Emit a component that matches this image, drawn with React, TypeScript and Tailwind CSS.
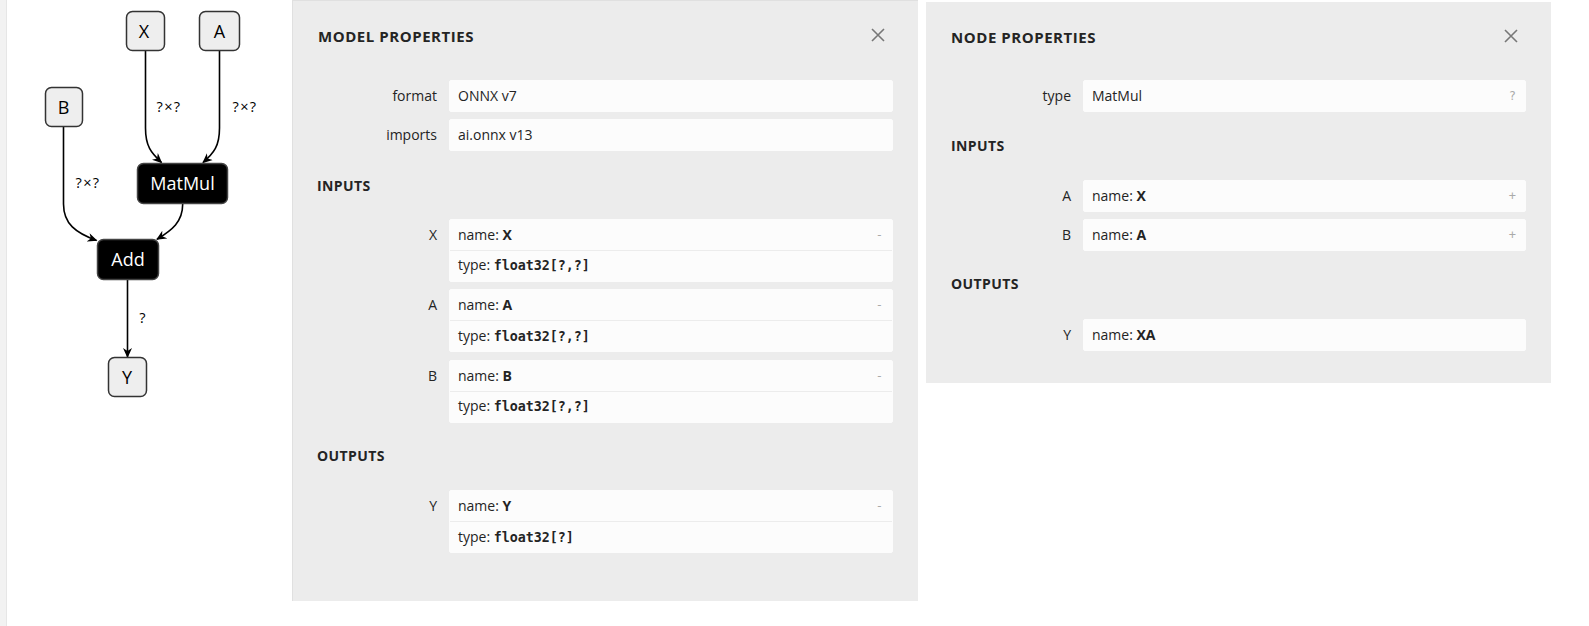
import React from "react";

type Line = { k: string; v: string; code?: boolean };
type Item = { label: string; lines: Line[]; exp?: string; plain?: boolean };

function CloseIcon() {
  return (
    <svg width="14" height="14" viewBox="0 0 14 14" className="block">
      <path d="M1 1 L13 13 M13 1 L1 13" stroke="#777777" strokeWidth="1.6" fill="none" />
    </svg>
  );
}

function ValueBox({ item }: { item: Item }) {
  return (
    <div className="flex-1 rounded-[2px] border border-[#fcfcfc] bg-[#fcfcfc]">
      {item.lines.map((l, i) => (
        <div
          key={i}
          className={
            "flex items-center justify-between pl-[8px] pr-[9px] leading-[30px] " +
            (i > 0 ? "h-[31px] border-t border-[#ececec]" : "h-[30px]")
          }
        >
          <span className="text-[14px] text-[#242424]">
            {item.plain ? (
              l.v
            ) : (
              <>
                {l.k}:{" "}
                {l.code ? (
                  <code className="font-['DejaVu_Sans_Mono',monospace] text-[13.3px] font-bold">{l.v}</code>
                ) : (
                  <b className="font-bold">{l.v}</b>
                )}
              </>
            )}
          </span>
          {i === 0 && item.exp ? (
            <span className="font-['DejaVu_Sans_Mono',monospace] text-[12px] text-[#aaaaaa]">{item.exp}</span>
          ) : null}
        </div>
      ))}
    </div>
  );
}

function Row({ item }: { item: Item }) {
  return (
    <div className="flex">
      <div className="w-[120px] shrink-0 pt-[1px] text-right text-[14px] leading-[30px] text-[#242424]">{item.label}</div>
      <div className="w-[12px] shrink-0" />
      <ValueBox item={item} />
    </div>
  );
}

function Section({ title, items, pt }: { title: string; items: Item[]; pt: string }) {
  return (
    <>
      <div className={"h-[67.5px] text-[14px] font-bold leading-[20px] tracking-[0.4px] text-[#242424] " + pt}>{title}</div>
      <div className="flex flex-col gap-[7.5px]">
        {items.map((it, i) => (
          <Row key={i} item={it} />
        ))}
      </div>
    </>
  );
}

function Header({ title, titleTop, closeTop, height }: { title: string; titleTop: string; closeTop: string; height: string }) {
  return (
    <div className={"flex items-start justify-between pl-[25px] pr-[33px] " + height}>
      <div className={"text-[15px] font-bold leading-[20px] tracking-[0.55px] text-[#242424] " + titleTop}>{title}</div>
      <div className={closeTop}>
        <CloseIcon />
      </div>
    </div>
  );
}

function Graph() {
  const light = "#eeeeee";
  return (
    <svg width="285" height="626" viewBox="7 0 285 626" className="block">
      <defs>
        <marker id="arr" viewBox="0 0 10 10" refX="9" refY="5" markerWidth="10" markerHeight="10" markerUnits="userSpaceOnUse" orient="auto">
          <path d="M0,0.5 L10,5 L0,9.5 L3,5 z" fill="#000" />
        </marker>
      </defs>
      <g fill="none" stroke="#000" strokeWidth="1.6">
        <path d="M145.5 51 L145.5 128 C145.5 146 151 153 161.5 162.5" markerEnd="url(#arr)" />
        <path d="M219.5 51 L219.5 128 C219.5 146 214 153 203 162.5" markerEnd="url(#arr)" />
        <path d="M63.5 127 L63.5 204 C63.5 224 76 233 96.5 240.5" markerEnd="url(#arr)" />
        <path d="M182.7 204 C182.7 222 172 230 157 239.3" markerEnd="url(#arr)" />
        <path d="M127.5 280 L127.5 357" markerEnd="url(#arr)" />
      </g>
      <g fontFamily="'Open Sans', sans-serif" fontSize="14.5" fill="#000" textAnchor="middle" letterSpacing="1.4">
        <text x="169" y="112">?×?</text>
        <text x="245" y="112">?×?</text>
        <text x="88" y="188">?×?</text>
        <text x="143" y="323">?</text>
      </g>
      <g stroke="#333333" strokeWidth="1.5">
        <rect x="126.5" y="11.5" width="38" height="39" rx="6" fill={light} />
        <rect x="199.5" y="11.5" width="40" height="39" rx="6" fill={light} />
        <rect x="45.5" y="87.5" width="37" height="39" rx="6" fill={light} />
        <rect x="137.5" y="163.5" width="90" height="40" rx="6" fill="#000" stroke="#444" />
        <rect x="97.5" y="239.5" width="61" height="40" rx="6" fill="#000" stroke="#444" />
        <rect x="108.5" y="357.5" width="38" height="39" rx="6" fill={light} />
      </g>
      <g fontFamily="'Open Sans', sans-serif" fontSize="18" textAnchor="middle">
        <text x="144" y="37.5" fill="#000">X</text>
        <text x="219.5" y="37.5" fill="#000">A</text>
        <text x="63.5" y="113.5" fill="#000">B</text>
        <text x="182.5" y="190" fill="#fff">MatMul</text>
        <text x="128" y="266" fill="#fff">Add</text>
        <text x="127" y="383.5" fill="#000">Y</text>
      </g>
    </svg>
  );
}

export default function App() {
  const modelTop: Item[] = [
    { label: "format", lines: [{ k: "", v: "ONNX v7" }], plain: true },
    { label: "imports", lines: [{ k: "", v: "ai.onnx v13" }], plain: true },
  ];
  const modelInputs: Item[] = ["X", "A", "B"].map((n) => ({
    label: n,
    exp: "-",
    lines: [
      { k: "name", v: n },
      { k: "type", v: "float32[?,?]", code: true },
    ],
  }));
  const modelOutputs: Item[] = [
    {
      label: "Y",
      exp: "-",
      lines: [
        { k: "name", v: "Y" },
        { k: "type", v: "float32[?]", code: true },
      ],
    },
  ];
  const nodeTop: Item[] = [{ label: "type", lines: [{ k: "", v: "MatMul" }], plain: true, exp: "?" }];
  const nodeInputs: Item[] = [
    { label: "A", exp: "+", lines: [{ k: "name", v: "X" }] },
    { label: "B", exp: "+", lines: [{ k: "name", v: "A" }] },
  ];
  const nodeOutputs: Item[] = [{ label: "Y", lines: [{ k: "name", v: "XA" }] }];

  return (
    <div className="flex h-[626px] w-[1589px] overflow-hidden bg-white font-['Open_Sans',sans-serif] text-[#242424]">
      <div className="h-full w-[7px] shrink-0 border-r border-[#e6e6e6] bg-[#f2f2f2]" />
      <div className="h-full w-[285px] shrink-0">
        <Graph />
      </div>
      <div className="h-[601px] w-[626px] shrink-0 border-l border-t border-[#e0e0e0] bg-[#ececec] pr-[25px]">
        <Header title="MODEL PROPERTIES" height="h-[79px]" titleTop="mt-[25px]" closeTop="mt-[27px] -mr-[25px]" />
        <div className="pl-[24px]">
          <div className="flex flex-col gap-[7px]">
            {modelTop.map((it, i) => (
              <Row key={i} item={it} />
            ))}
          </div>
          <Section title="INPUTS" items={modelInputs} pt="pt-[24.5px]" />
          <Section title="OUTPUTS" items={modelOutputs} pt="pt-[23.5px]" />
        </div>
      </div>
      <div className="w-[8px] shrink-0" />
      <div className="mt-[2px] h-[381px] w-[625px] shrink-0 bg-[#ececec] pr-[25px]">
        <Header title="NODE PROPERTIES" height="h-[78px]" titleTop="mt-[25px]" closeTop="mt-[27px] -mr-[25px]" />
        <div className="pl-[25px]">
          <div className="flex flex-col gap-[7px]">
            {nodeTop.map((it, i) => (
              <Row key={i} item={it} />
            ))}
          </div>
          <Section title="INPUTS" items={nodeInputs} pt="pt-[23.5px]" />
          <Section title="OUTPUTS" items={nodeOutputs} pt="pt-[23px]" />
        </div>
      </div>
    </div>
  );
}
